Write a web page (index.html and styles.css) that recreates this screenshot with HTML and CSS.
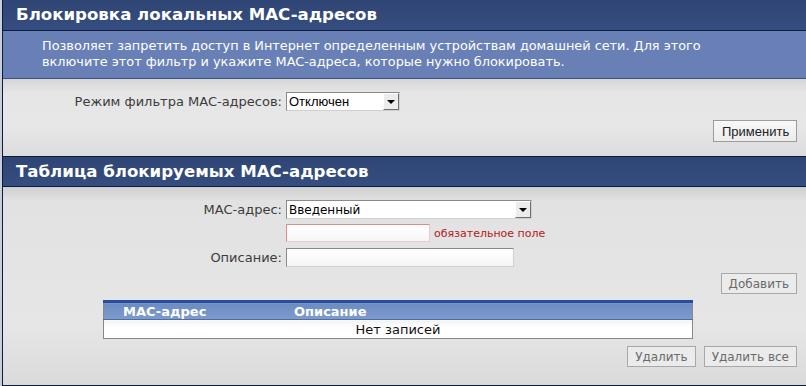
FILE: index.html
```html
<!DOCTYPE html>
<html lang="ru">
<head>
  <meta charset="UTF-8" />
  <title>Блокировка MAC-адресов</title>
  <link rel="stylesheet" href="styles.css">
</head>
<body>
  <div class="page">
    <section class="panel">
      <h2 class="panel-title">Блокировка локальных MAC-адресов</h2>
      <div class="panel-desc">
        Позволяет запретить доступ в Интернет определенным устройствам домашней сети. Для этого<br>
        включите этот фильтр и укажите MAC-адреса, которые нужно блокировать.
      </div>
      <div class="panel-body first">
        <div class="form-grid">
          <label class="form-label">Режим фильтра MAC-адресов:</label>
          <div class="select-box narrow">
            <select class="sel sel-arial"><option>Отключен</option></select>
            <span class="select-arrow"></span>
          </div>
        </div>
        <div class="actions apply-row"><button class="btn btn-apply">Применить</button></div>
      </div>
    </section>

    <section class="panel">
      <h2 class="panel-title">Таблица блокируемых MAC-адресов</h2>
      <div class="panel-body second">
        <div class="form-grid">
          <label class="form-label">MAC-адрес:</label>
          <div class="select-box wide">
            <select class="sel"><option>Введенный</option></select>
            <span class="select-arrow"></span>
          </div>
          <span></span>
          <div class="field-line">
            <input class="txt txt-error" type="text">
            <span class="req">обязательное поле</span>
          </div>
          <label class="form-label">Описание:</label>
          <div><input class="txt txt-desc" type="text"></div>
        </div>
        <div class="actions add-row"><button class="btn btn-light">Добавить</button></div>

        <table class="mac-table">
          <thead>
            <tr><th class="col-mac">MAC-адрес</th><th>Описание</th></tr>
          </thead>
          <tbody>
            <tr><td colspan="2" class="empty">Нет записей</td></tr>
          </tbody>
        </table>

        <div class="actions del-row">
          <button class="btn btn-light">Удалить</button>
          <button class="btn btn-light">Удалить все</button>
        </div>
      </div>
    </section>
  </div>
</body>
</html>
```

FILE: styles.css
```css
:root {
  --head: #344b7d;
  --head-line: #0a1b3c;
  --desc: #6880b5;
  --body: #e6e6e6;
  --label: #3c3c3c;
}
html, body { margin: 0; padding: 0; }
body {
  font-family: 'DejaVu Sans', Verdana, sans-serif;
  background: #c9ced8;
  width: 806px;
  height: 386px;
  overflow: hidden;
}
.page {
  margin-left: 2px;
  border-left: 1px solid var(--head-line);
  background: var(--body);
  height: 386px;
  box-sizing: border-box;
  border-bottom: 1px solid var(--head-line);
}
.panel-title {
  margin: 0;
  height: 30px;
  line-height: 30px;
  padding-left: 13px;
  background: linear-gradient(#2f4574, #354d80);
  border-bottom: 1px solid var(--head-line);
  color: #fff;
  font-size: 16.6px;
  font-weight: bold;
}
.panel + .panel .panel-title { border-top: 1px solid var(--head-line); height: 29px; }
.panel-desc {
  background: var(--desc);
  color: #fff;
  font-size: 12.85px;
  line-height: 16px;
  padding: 7px 0 8px 39px;
  border-bottom: 1px solid #3a4f80;
}
.panel-body {
  background: linear-gradient(#d6d6d6, #e6e6e6 14px, #e7e7e7 60%, #dcdcdc);
}
.panel-body.first { padding-top: 13px; height: 64px; }
.panel-body.second {
  padding-top: 13px;
  height: 185px;
  background: linear-gradient(#cfcfcf, #e2e2e2 14px, #e6e6e6 70%, #dadada);
}
.form-grid {
  display: grid;
  grid-template-columns: 279px auto;
  column-gap: 4px;
  row-gap: 5px;
  align-items: center;
}
.form-label {
  text-align: right;
  font-size: 13px;
  color: var(--label);
}
.select-box {
  display: flex;
  height: 19px;
  box-sizing: border-box;
  background: #fff;
  border: 1px solid #8a8a8a;
  border-right-color: #d0d0d0;
  border-bottom-color: #d0d0d0;
}
.select-box.narrow { width: 114px; }
.select-box.wide { width: 246px; }
.sel {
  appearance: none;
  -webkit-appearance: none;
  border: none;
  background: #fff;
  flex: 1;
  padding: 0 2px;
  font-family: 'DejaVu Sans', sans-serif;
  font-size: 12px;
  color: #000;
  outline: none;
}
.sel-arial { font-family: 'Liberation Sans', Arial, sans-serif; font-size: 13px; }
.select-arrow {
  width: 16px;
  box-sizing: border-box;
  background: #ececec;
  border: 1px solid #fff;
  border-right-color: #707070;
  border-bottom-color: #707070;
  display: flex;
  align-items: center;
  justify-content: center;
}
.select-arrow::after {
  content: "";
  border-left: 4px solid transparent;
  border-right: 4px solid transparent;
  border-top: 4px solid #000;
}
.field-line { display: flex; align-items: center; gap: 4px; }
.txt {
  height: 18px;
  box-sizing: border-box;
  border: 1px solid #8a8a8a;
  border-right-color: #d0d0d0;
  border-bottom-color: #d0d0d0;
  background: linear-gradient(#fff, #f6f6f6);
  padding: 0 2px;
}
.txt-error { width: 144px; border-color: #e28a8a; border-bottom-color: #ecc8c8; border-right-color: #ecc8c8; }
.txt-desc { width: 228px; height: 19px; }
.req { color: #b42020; font-size: 11px; margin-top: 1px; }
.actions {
  display: flex;
  justify-content: flex-end;
  gap: 8px;
  padding-right: 9px;
}
.apply-row { margin-top: 9px; }
.add-row { margin-top: 6px; }
.del-row { margin-top: 7px; }
.btn {
  height: 21px;
  box-sizing: border-box;
  padding: 0 8px;
  background: linear-gradient(#f8f8f8, #ececec);
  border: 1px solid #a8a8a8;
  font-size: 13px;
  color: #222;
  cursor: pointer;
}
.btn-apply { font-family: 'Liberation Sans', Arial, sans-serif; height: 22px; width: 84px; border-color: #9c9c9c; }
.btn-light {
  font-family: 'DejaVu Sans', sans-serif;
  font-size: 12px;
  color: #6a6a6a;
  background: #ebebeb;
  padding: 0 7px;
}
.mac-table {
  margin: 6px 0 0 100px;
  width: 590px;
  border-collapse: collapse;
  border: 1px solid #888;
  border-top: none;
  font-size: 13px;
}
.mac-table th {
  height: 16px;
  padding: 0;
  text-align: left;
  color: #fff;
  font-weight: bold;
  border-top: 3px solid #2a4c9c;
  border-bottom: 1px solid #4b6cab;
  background: linear-gradient(#6b8cc2, #7f9bcb);
}
.mac-table .col-mac { width: 171px; padding-left: 19px; }
.mac-table td.empty {
  height: 18px;
  padding: 0;
  text-align: center;
  color: #111;
  background: linear-gradient(#f2f2f2, #fff 6px);
}
```
